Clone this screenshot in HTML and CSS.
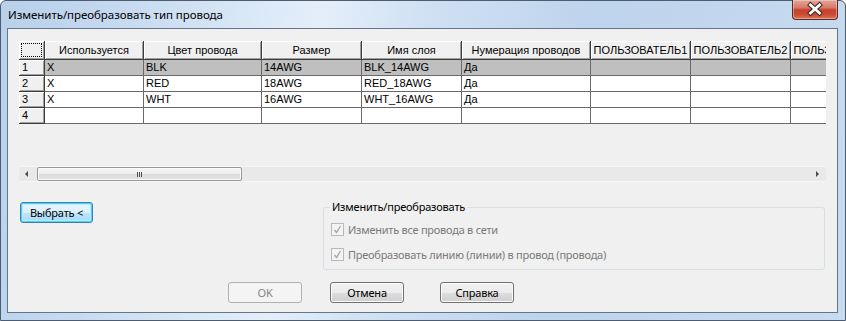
FILE: index.html
```html
<!DOCTYPE html>
<html lang="ru">
<head>
  <meta charset="UTF-8" />
  <title>Изменить/преобразовать тип провода</title>
  <link rel="stylesheet" href="styles.css">
</head>
<body>
  <div class="window">
    <div class="titlebar">
      <span class="title">Изменить/преобразовать тип провода</span>
      <button class="close-btn" title="Закрыть">
        <svg width="46" height="19" viewBox="0 0 46 19">
          <path d="M18.5 5 L27.5 13 M27.5 5 L18.5 13" stroke="#3a2a28" stroke-width="4.8" stroke-linecap="square" fill="none"/>
          <path d="M18.5 5 L27.5 13 M27.5 5 L18.5 13" stroke="#ffffff" stroke-width="2.8" stroke-linecap="square" fill="none"/>
        </svg>
      </button>
    </div>

    <div class="client">
      <div class="grid">
        <div class="grid-view">
          <table class="wires">
            <thead>
              <tr>
                <th class="corner"><span></span></th>
                <th class="w-used">Используется</th>
                <th class="w-color">Цвет провода</th>
                <th class="w-size">Размер</th>
                <th class="w-layer">Имя слоя</th>
                <th class="w-num">Нумерация проводов</th>
                <th class="w-user">ПОЛЬЗОВАТЕЛЬ1</th>
                <th class="w-user">ПОЛЬЗОВАТЕЛЬ2</th>
                <th class="w-user">ПОЛЬЗОВАТЕЛЬ3</th>
              </tr>
            </thead>
            <tbody id="rows"></tbody>
          </table>
        </div>
        <div class="hscroll">
          <span class="arrow arrow-left"></span>
          <span class="thumb"><span class="grip"></span></span>
          <span class="arrow arrow-right"></span>
        </div>
      </div>

      <div class="mid">
        <button class="btn btn-default">Выбрать &lt;</button>
        <fieldset class="group">
          <legend>Изменить/преобразовать</legend>
          <label class="check">
            <span class="box"><svg width="11" height="11" viewBox="0 0 11 11"><path d="M2.5 6 L4.5 8.5 L8.5 2" stroke="#a8a8a8" stroke-width="1.4" fill="none"/></svg></span>
            Изменить все провода в сети
          </label>
          <label class="check">
            <span class="box"><svg width="11" height="11" viewBox="0 0 11 11"><path d="M2.5 6 L4.5 8.5 L8.5 2" stroke="#a8a8a8" stroke-width="1.4" fill="none"/></svg></span>
            Преобразовать линию (линии) в провод (провода)
          </label>
        </fieldset>
      </div>

      <div class="actions">
        <button class="btn btn-ok" disabled>OK</button>
        <button class="btn btn-cancel">Отмена</button>
        <button class="btn btn-help">Справка</button>
      </div>
    </div>
  </div>

  <script>
    const rows = [
      { used: "X", color: "BLK", size: "14AWG", layer: "BLK_14AWG", num: "Да" },
      { used: "X", color: "RED", size: "18AWG", layer: "RED_18AWG", num: "Да" },
      { used: "X", color: "WHT", size: "16AWG", layer: "WHT_16AWG", num: "Да" },
      { used: "", color: "", size: "", layer: "", num: "" },
    ];

    const tbody = document.getElementById("rows");

    rows.forEach((row, index) => {
      const tr = document.createElement("tr");
      if (index === 0) tr.className = "selected";
      tr.innerHTML = `
        <th class="row-head">${index + 1}</th>
        <td>${row.used}</td>
        <td>${row.color}</td>
        <td>${row.size}</td>
        <td>${row.layer}</td>
        <td>${row.num}</td>
        <td></td>
        <td></td>
        <td></td>
      `;
      tbody.appendChild(tr);
    });
  </script>
</body>
</html>
```

FILE: styles.css
```css
body {
  margin: 0;
  width: 846px;
  height: 321px;
  overflow: hidden;
  background: #ffffff;
  font-family: "Noto Sans", "Open Sans", sans-serif;
}

.window {
  box-sizing: border-box;
  width: 846px;
  height: 321px;
  border: 1px solid #4c5d72;
  border-radius: 6px 6px 0 0;
  padding: 0 7px 7px 6px;
  display: flex;
  flex-direction: column;
  background: linear-gradient(100deg, #b8d0ea 0%, #c6daf0 14%, #dae8f6 28%, #e4eef9 36%, #cfe0f3 48%, #bed4ec 66%, #c8dbf0 100%);
}

/* title bar */

.titlebar {
  height: 27px;
  display: flex;
  align-items: flex-start;
}

.title {
  padding-left: 1px;
  line-height: 27px;
  font-size: 11.5px;
  letter-spacing: -0.05px;
  color: #000;
}

.close-btn {
  margin-left: auto;
  margin-top: -1px;
  width: 46px;
  height: 20px;
  padding: 0;
  border: 1px solid #5b2b25;
  border-top: none;
  border-radius: 0 0 4px 4px;
  background: linear-gradient(#e3a79c 0%, #d57a68 40%, #c8432e 52%, #c74a31 75%, #d9765b 100%);
  box-shadow: inset 0 0 0 1px rgba(255, 220, 210, 0.45);
  cursor: pointer;
}

.close-btn svg {
  display: block;
  margin: -1px 0 0 -1px;
}

/* client area */

.client {
  flex: 1;
  box-sizing: border-box;
  border: 1px solid #66768a;
  background: #f0f0f0;
  padding: 12px 11px 0 11px;
}

.grid {
  width: 807px;
}

.grid-view {
  height: 125px;
  overflow: hidden;
}

.wires {
  table-layout: fixed;
  width: 872px;
  border-collapse: separate;
  border-spacing: 0;
  font-family: "Liberation Sans", Arial, sans-serif;
  font-size: 11px;
  color: #000;
}

.wires th,
.wires td {
  box-sizing: border-box;
  padding: 0 0 0 2px;
  border-right: 1px solid #6a6a6a;
  border-bottom: 1px solid #6a6a6a;
  white-space: nowrap;
  overflow: hidden;
  text-align: left;
  font-weight: normal;
}

.wires thead th {
  height: 19px;
  line-height: 17px;
  text-align: center;
  padding: 0;
  background: #f0f0f0;
  border-right-color: #3c3c3c;
  border-bottom-color: #3c3c3c;
  box-shadow: inset 1px 1px 0 #ffffff, inset -1px -1px 0 #a0a0a0;
}

.wires .corner {
  width: 26px;
  padding: 2px;
}

.wires .corner span {
  display: block;
  box-sizing: border-box;
  height: 14px;
  border: 1px dotted #000;
}

.w-used { width: 99px; }
.w-color { width: 118px; }
.w-size { width: 100px; }
.w-layer { width: 100px; }
.w-num { width: 129px; }
.w-user { width: 100px; }

.wires tbody td,
.wires tbody th {
  height: 16px;
  line-height: 15px;
  background: #ffffff;
}

.wires tbody .row-head {
  padding-left: 3px;
  background: #f0f0f0;
  border-right-color: #3c3c3c;
  border-bottom-color: #3c3c3c;
  box-shadow: inset 1px 1px 0 #ffffff, inset -1px -1px 0 #a0a0a0;
}

.wires tr.selected td {
  background: #bfbfbf;
}

/* horizontal scroll bar */

.hscroll {
  box-sizing: border-box;
  height: 16px;
  display: flex;
  align-items: center;
  background: #e9e9e9;
  border-top: 1px solid #f6f6f6;
  border-bottom: 1px solid #f6f6f6;
}

.arrow {
  width: 0;
  height: 0;
  border-top: 3px solid transparent;
  border-bottom: 3px solid transparent;
}

.arrow-left {
  margin-left: 6px;
  border-right: 3px solid #4a4a4a;
}

.arrow-right {
  margin-left: auto;
  margin-right: 7px;
  border-left: 3px solid #4a4a4a;
}

.thumb {
  box-sizing: border-box;
  margin-left: 9px;
  width: 205px;
  height: 14px;
  border: 1px solid #999999;
  border-radius: 2px;
  background: linear-gradient(#f6f6f6 0%, #ececec 50%, #dddddd 51%, #e2e2e2 100%);
  box-shadow: inset 0 0 0 1px #fafafa;
  display: flex;
  justify-content: center;
  align-items: center;
}

.grip {
  width: 5px;
  height: 5px;
  background: repeating-linear-gradient(90deg, #4d4d4d 0 1px, transparent 1px 2px);
}

/* buttons */

.btn {
  box-sizing: border-box;
  height: 21px;
  padding: 0;
  border: 1px solid #707070;
  border-radius: 3px;
  background: linear-gradient(#f2f2f2 0%, #ebebeb 50%, #dddddd 51%, #cfcfcf 100%);
  box-shadow: inset 0 0 0 1px #fcfcfc;
  font-family: "Noto Sans", "Open Sans", sans-serif;
  font-size: 11px;
  letter-spacing: -0.2px;
  line-height: 18px;
  color: #000;
  cursor: pointer;
}

.btn-default {
  width: 73px;
  margin: 3px 0 0 1px;
  border-color: #3c7fb1;
  box-shadow: inset 0 0 0 1px #48d3fb, inset 0 0 0 2px #bfeafb;
  background: linear-gradient(#eaf6fd 0%, #d9f0fc 50%, #bee6fd 51%, #a7d9f5 100%);
}

.btn:disabled {
  border-color: #adb2b5;
  background: #f4f4f4;
  box-shadow: none;
  color: #838383;
  cursor: default;
}

.mid {
  display: flex;
  align-items: flex-start;
  margin-top: 17px;
}

.group {
  box-sizing: border-box;
  width: 502px;
  height: 71px;
  margin: 0 1px 0 auto;
  padding: 0;
  border: 1px solid #d5dfe5;
  border-radius: 3px;
  min-inline-size: 0;
}

.group legend {
  margin-left: 6px;
  padding: 0 2px;
  font-size: 11px;
  letter-spacing: -0.2px;
  line-height: 16px;
  color: #000;
}

.check {
  display: flex;
  align-items: center;
  gap: 4px;
  height: 16px;
  margin: 6px 0 0 7px;
  font-size: 11px;
  letter-spacing: -0.25px;
  color: #7a7a7a;
}

.check + .check {
  margin-top: 9px;
}

.box {
  box-sizing: border-box;
  width: 13px;
  height: 13px;
  border: 1px solid #b8b8b8;
  background: #f4f4f4;
  display: flex;
  align-items: center;
  justify-content: center;
}

.actions {
  display: flex;
  margin-top: 12px;
  padding-left: 209px;
}

.actions .btn {
  width: 74px;
}

.btn-cancel {
  margin-left: 28px;
}

.btn-help {
  margin-left: 36px;
}
```
